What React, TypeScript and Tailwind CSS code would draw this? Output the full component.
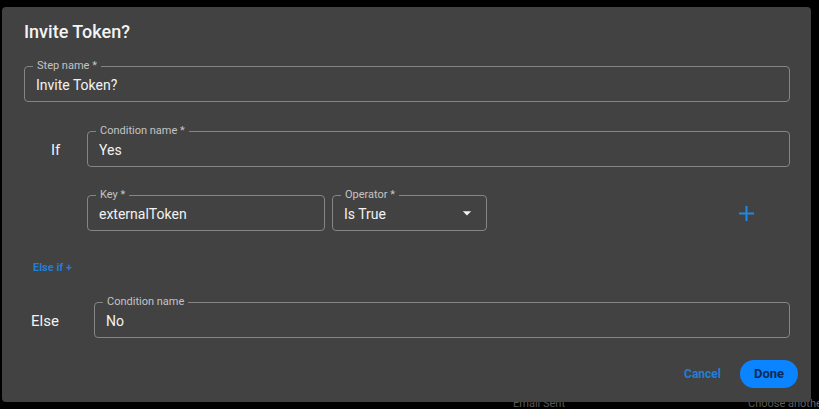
import React from 'react';

const font = { fontFamily: 'Roboto, "Noto Sans", sans-serif' };

function Field({ label, value, className = '', select = false }: { label: string; value: string; className?: string; select?: boolean }) {
  return (
    <div className={`relative h-[36px] rounded border border-[#858585] flex items-center pl-[11px] pr-2 ${className}`}>
      <span className="absolute -top-[8px] left-2 px-1 bg-[#424242] text-[11px] leading-[13px] text-[#c4c4c4] whitespace-nowrap">{label}</span>
      <span className="flex-1 pt-[1px] text-[14px] leading-5 text-[#f2f2f2]">{value}</span>
      {select && (
        <svg width="20" height="20" viewBox="0 0 24 24" className="mr-[1px] fill-[#f2f2f2]">
          <path d="M7 10l5 5 5-5z" />
        </svg>
      )}
    </div>
  );
}

function Dialog() {
  return (
    <div className="absolute left-[2px] top-[7px] w-[809px] h-[395px] rounded bg-[#424242] shadow-2xl pt-[13px] pl-[22px] pr-[21px] flex flex-col">
      <h2 className="text-[18px] leading-6 font-medium text-[#f4f4f4]">Invite Token?</h2>

      <Field label="Step name *" value="Invite Token?" className="mt-[22px]" />

      {/* If */}
      <div className="mt-[29px] flex items-center">
        <span className="w-[63px] pl-[27px] pt-[2px] text-[15px] text-[#f2f2f2]">If</span>
        <Field label="Condition name *" value="Yes" className="flex-1" />
      </div>

      <div className="mt-[28px] flex items-center pl-[63px]">
        <Field label="Key *" value="externalToken" className="w-[238px]" />
        <Field label="Operator *" value="Is True" className="w-[155px] ml-[7px]" select />
        <button className="ml-[252px] text-[#1e88e5]">
          <svg width="15" height="15" viewBox="0 0 15 15" stroke="currentColor" strokeWidth="2">
            <path d="M7.5 0v15M0 7.5h15" />
          </svg>
        </button>
      </div>

      <div className="mt-[29px] pl-[9px] text-[11px] leading-4 font-bold text-[#1f7fd6]">Else if +</div>

      {/* Else */}
      <div className="mt-[26px] flex items-center">
        <span className="w-[70px] pl-[7px] pt-[2px] text-[15px] text-[#f2f2f2]">Else</span>
        <Field label="Condition name" value="No" className="flex-1" />
      </div>

      <div className="mt-[22px] -mr-[8px] flex items-center justify-end">
        <button className="mr-[19px] text-[12px] font-bold text-[#1f7fd6]">Cancel</button>
        <button className="w-[58px] h-[28px] rounded-full bg-[#0a84ff] text-[13px] font-bold text-[#0c2b57]">Done</button>
      </div>
    </div>
  );
}

export default function App() {
  return (
    <div className="relative w-[819px] h-[409px] overflow-hidden bg-black" style={font}>
      {/* page behind the modal */}
      <div className="h-full flex flex-col justify-end">
        <div className="flex items-center h-[12px] -mb-[1px] text-[11px] leading-[12px] text-[#6b6b6b] whitespace-nowrap">
          <span className="ml-[509px] w-[9px] h-[9px] rounded-full bg-[#2e6b3a]" />
          <span className="ml-[4px]">Email Sent</span>
          <span className="ml-[183px]">Choose another auth</span>
        </div>
      </div>
      <Dialog />
    </div>
  );
}
